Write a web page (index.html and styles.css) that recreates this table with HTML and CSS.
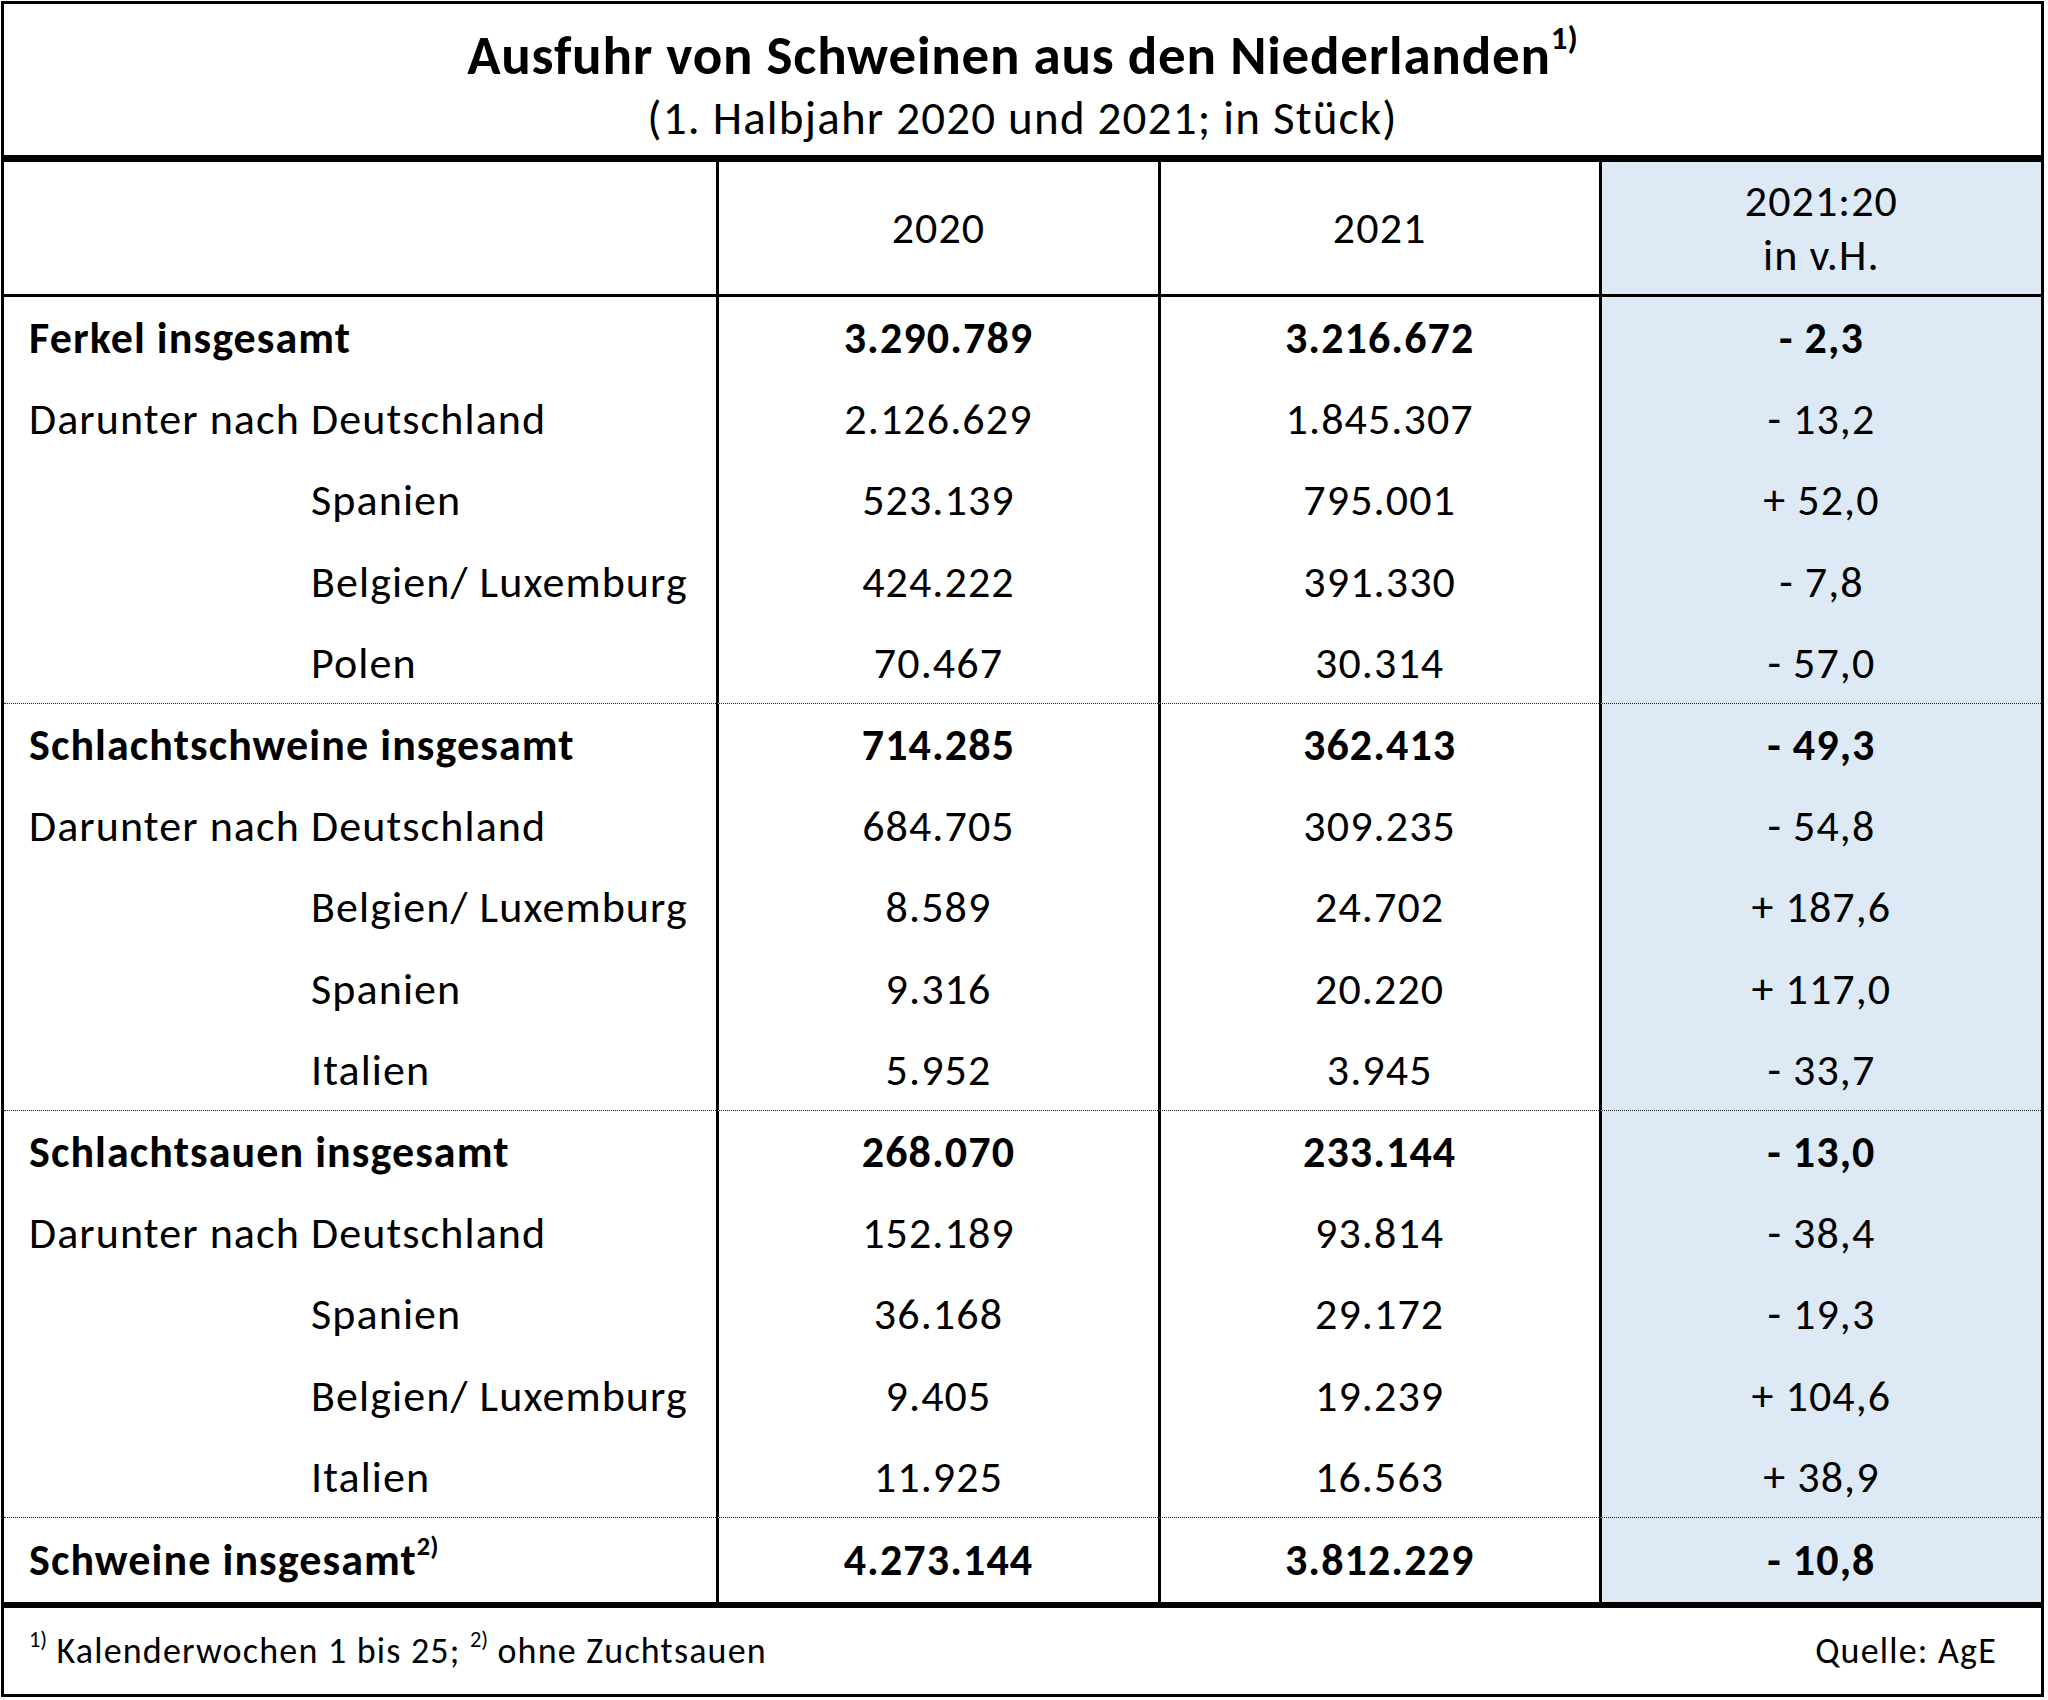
FILE: index.html
```html
<!DOCTYPE html>
<html lang="de">
<head>
<meta charset="utf-8">
<title>Ausfuhr von Schweinen aus den Niederlanden</title>
<link rel="stylesheet" href="styles.css">
</head>
<body>
<div class="sheet">
  <div class="title">
    <div class="title-main">Ausfuhr von Schweinen aus den Niederlanden<sup class="sup">1)</sup></div>
    <div class="title-sub">(1. Halbjahr 2020 und 2021; in Stück)</div>
  </div>
  <table class="data">
    <colgroup>
      <col class="c-label"><col class="c-num"><col class="c-num"><col class="c-pct">
    </colgroup>
    <thead>
      <tr class="head-row">
        <th></th>
        <th>2020</th>
        <th>2021</th>
        <th class="pct">2021:20<br>in v.H.</th>
      </tr>
    </thead>
    <tbody>
      <tr class="row strong"><td class="label">Ferkel insgesamt</td><td>3.290.789</td><td>3.216.672</td><td class="pct">- 2,3</td></tr>
      <tr class="row"><td class="label">Darunter nach Deutschland</td><td>2.126.629</td><td>1.845.307</td><td class="pct">- 13,2</td></tr>
      <tr class="row"><td class="label sub">Spanien</td><td>523.139</td><td>795.001</td><td class="pct">+ 52,0</td></tr>
      <tr class="row"><td class="label sub">Belgien/ Luxemburg</td><td>424.222</td><td>391.330</td><td class="pct">- 7,8</td></tr>
      <tr class="row group-end"><td class="label sub">Polen</td><td>70.467</td><td>30.314</td><td class="pct">- 57,0</td></tr>

      <tr class="row strong"><td class="label">Schlachtschweine insgesamt</td><td>714.285</td><td>362.413</td><td class="pct">- 49,3</td></tr>
      <tr class="row"><td class="label">Darunter nach Deutschland</td><td>684.705</td><td>309.235</td><td class="pct">- 54,8</td></tr>
      <tr class="row"><td class="label sub">Belgien/ Luxemburg</td><td>8.589</td><td>24.702</td><td class="pct">+ 187,6</td></tr>
      <tr class="row"><td class="label sub">Spanien</td><td>9.316</td><td>20.220</td><td class="pct">+ 117,0</td></tr>
      <tr class="row group-end"><td class="label sub">Italien</td><td>5.952</td><td>3.945</td><td class="pct">- 33,7</td></tr>

      <tr class="row strong"><td class="label">Schlachtsauen insgesamt</td><td>268.070</td><td>233.144</td><td class="pct">- 13,0</td></tr>
      <tr class="row"><td class="label">Darunter nach Deutschland</td><td>152.189</td><td>93.814</td><td class="pct">- 38,4</td></tr>
      <tr class="row"><td class="label sub">Spanien</td><td>36.168</td><td>29.172</td><td class="pct">- 19,3</td></tr>
      <tr class="row"><td class="label sub">Belgien/ Luxemburg</td><td>9.405</td><td>19.239</td><td class="pct">+ 104,6</td></tr>
      <tr class="row group-end"><td class="label sub">Italien</td><td>11.925</td><td>16.563</td><td class="pct">+ 38,9</td></tr>

      <tr class="row strong total"><td class="label">Schweine insgesamt<sup class="sup">2)</sup></td><td>4.273.144</td><td>3.812.229</td><td class="pct">- 10,8</td></tr>
    </tbody>
  </table>
  <div class="footer">
    <span class="note"><sup class="sup">1)</sup> Kalenderwochen 1 bis 25; <sup class="sup">2)</sup> ohne Zuchtsauen</span>
    <span class="source">Quelle: AgE</span>
  </div>
</div>
</body>
</html>
```

FILE: styles.css
```css
html, body {
  margin: 0;
  padding: 0;
  background: #ffffff;
}

body {
  font-family: Carlito, Calibri, Lato, "Noto Sans", sans-serif;
  color: #000000;
}

.sheet {
  box-sizing: border-box;
  width: 2043px;
  height: 1696px;
  margin: 1px 0 0 1px;
  border: 3px solid #000;
  display: flex;
  flex-direction: column;
}

.title {
  box-sizing: content-box;
  height: 151px;
  border-bottom: 7px solid #000;
  display: flex;
  flex-direction: column;
  align-items: center;
  justify-content: flex-start;
  padding: 0;
}

.title-main {
  margin-top: 22px;
  font-size: 55px;
  font-weight: 700;
  line-height: 60px;
  letter-spacing: 0.8px;
}

.title-sub {
  margin-top: 4px;
  font-size: 47px;
  font-weight: 400;
  line-height: 56px;
  letter-spacing: 1.2px;
}

.sup {
  font-size: 0.6em;
  line-height: 0;
  vertical-align: 0.75em;
  letter-spacing: 0;
}

.data {
  width: 100%;
  table-layout: fixed;
  border-collapse: separate;
  border-spacing: 0;
  font-size: 44px;
  letter-spacing: 1.1px;
}

.c-label { width: 712px; }
.c-num { width: 441px; }
.c-pct { width: 442px; }

.data th,
.data td {
  padding: 0;
  text-align: center;
  vertical-align: middle;
  font-weight: 400;
  white-space: nowrap;
}

.data th + th,
.data td + td {
  border-left: 3px solid #000;
}

.head-row {
  height: 135px;
}

.head-row th {
  border-bottom: 3px solid #000;
  line-height: 54px;
}

.row {
  height: 81.4px;
}

.row td {
  line-height: 50px;
}

.data .pct {
  background: #dde9f5;
}

.data td.label {
  text-align: left;
  padding-left: 25px;
}

.data td.label.sub {
  padding-left: 307px;
}

.strong td {
  font-weight: 700;
}

.group-end td {
  border-bottom: 1px dotted #222;
}

.total {
  height: 84px;
}

.footer {
  flex: 1;
  border-top: 6px solid #000;
  display: flex;
  align-items: center;
  justify-content: space-between;
  padding: 0 44px 0 25px;
  font-size: 36px;
  letter-spacing: 1.2px;
}

.footer .sup {
  font-size: 0.62em;
  vertical-align: 0.7em;
}
```
